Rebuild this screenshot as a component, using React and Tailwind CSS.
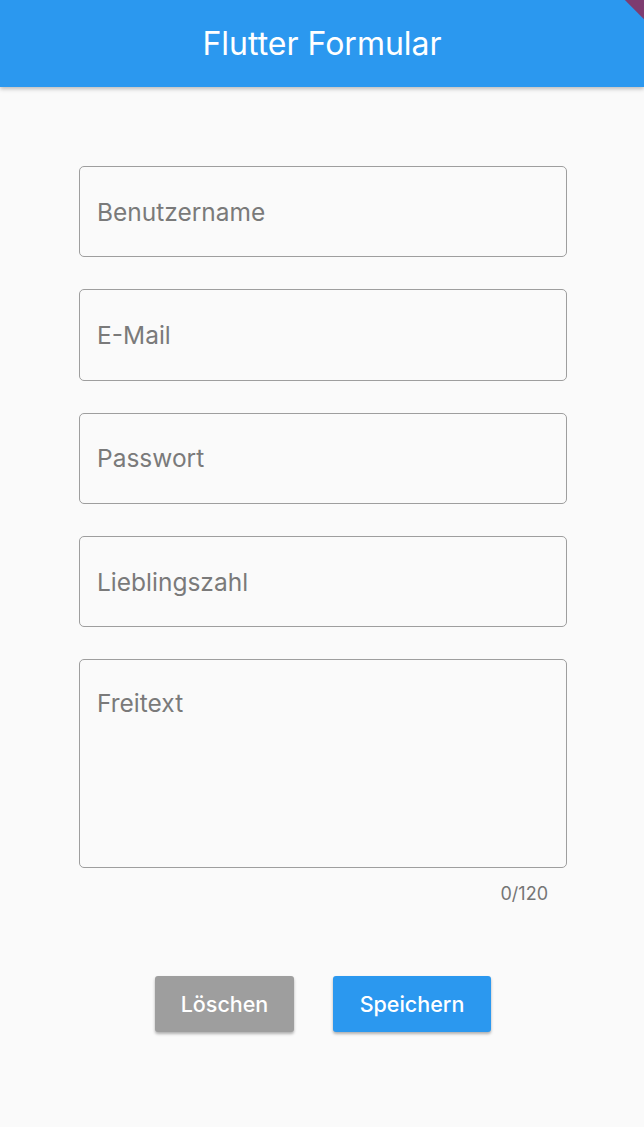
import { useState } from 'react';

const fields = ['Benutzername', 'E-Mail', 'Passwort', 'Lieblingszahl'];

export default function App() {
  const [values, setValues] = useState({});
  const [freitext, setFreitext] = useState('');

  const setValue = (key, v) => setValues({ ...values, [key]: v });

  return (
    <div className="relative min-h-[1127px] bg-[#fafafa] overflow-hidden" style={{ fontFamily: 'Inter, "Noto Sans", sans-serif' }}>
      {/* App bar */}
      <header className="h-[87px] bg-[#2b98ef] flex items-center justify-center shadow-[0_2px_4px_rgba(0,0,0,0.25)] relative z-10">
        <h1 className="text-white text-[32px] mt-[1px]">Flutter Formular</h1>
      </header>

      {/* Debug banner corner */}
      <div className="absolute top-0 right-0 w-[60px] h-[60px] overflow-hidden z-20 pointer-events-none">
        <div className="absolute w-[120px] h-[20px] bg-[#a3163a]/70 rotate-45 top-[8px] left-[13px]" />
      </div>

      <form className="flex flex-col pl-[79px] pt-[79px]" onSubmit={(e) => e.preventDefault()}>
        <div className="flex flex-col gap-[32px] w-[488px]">
          {fields.map((f) => (
            <input
              key={f}
              type={f === 'Passwort' ? 'password' : 'text'}
              placeholder={f}
              value={values[f] || ''}
              onChange={(e) => setValue(f, e.target.value)}
              className="h-[91.3px] w-full rounded-[5px] border-[1.5px] border-[#9e9e9e] bg-transparent px-[17px] text-[24.5px] text-[#212121] placeholder:text-[#7a7a7a] outline-none"
            />
          ))}
          <div>
            <textarea
              placeholder="Freitext"
              maxLength={120}
              value={freitext}
              onChange={(e) => setFreitext(e.target.value)}
              className="block h-[209px] w-full resize-none rounded-[5px] border-[1.5px] border-[#9e9e9e] bg-transparent px-[17px] pt-[27px] text-[24.5px] leading-[32px] text-[#212121] placeholder:text-[#7a7a7a] outline-none"
            />
            <div className="flex justify-end pr-[19px] pt-[12px] text-[18px] text-[#757575]">{freitext.length}/120</div>
          </div>
        </div>

        <div className="flex justify-center gap-[39px] pt-[69px] w-[488px]">
          <button
            type="button"
            onClick={() => { setValues({}); setFreitext(''); }}
            className="w-[139px] h-[56px] rounded-[3px] bg-[#9e9e9e] text-white text-[21.5px] font-medium shadow-[0_2px_3px_rgba(0,0,0,0.3)]"
          >
            Löschen
          </button>
          <button
            type="submit"
            className="w-[158px] h-[56px] rounded-[3px] bg-[#2b98ef] text-white text-[21.5px] font-medium shadow-[0_2px_3px_rgba(0,0,0,0.3)]"
          >
            Speichern
          </button>
        </div>
      </form>
    </div>
  );
}
